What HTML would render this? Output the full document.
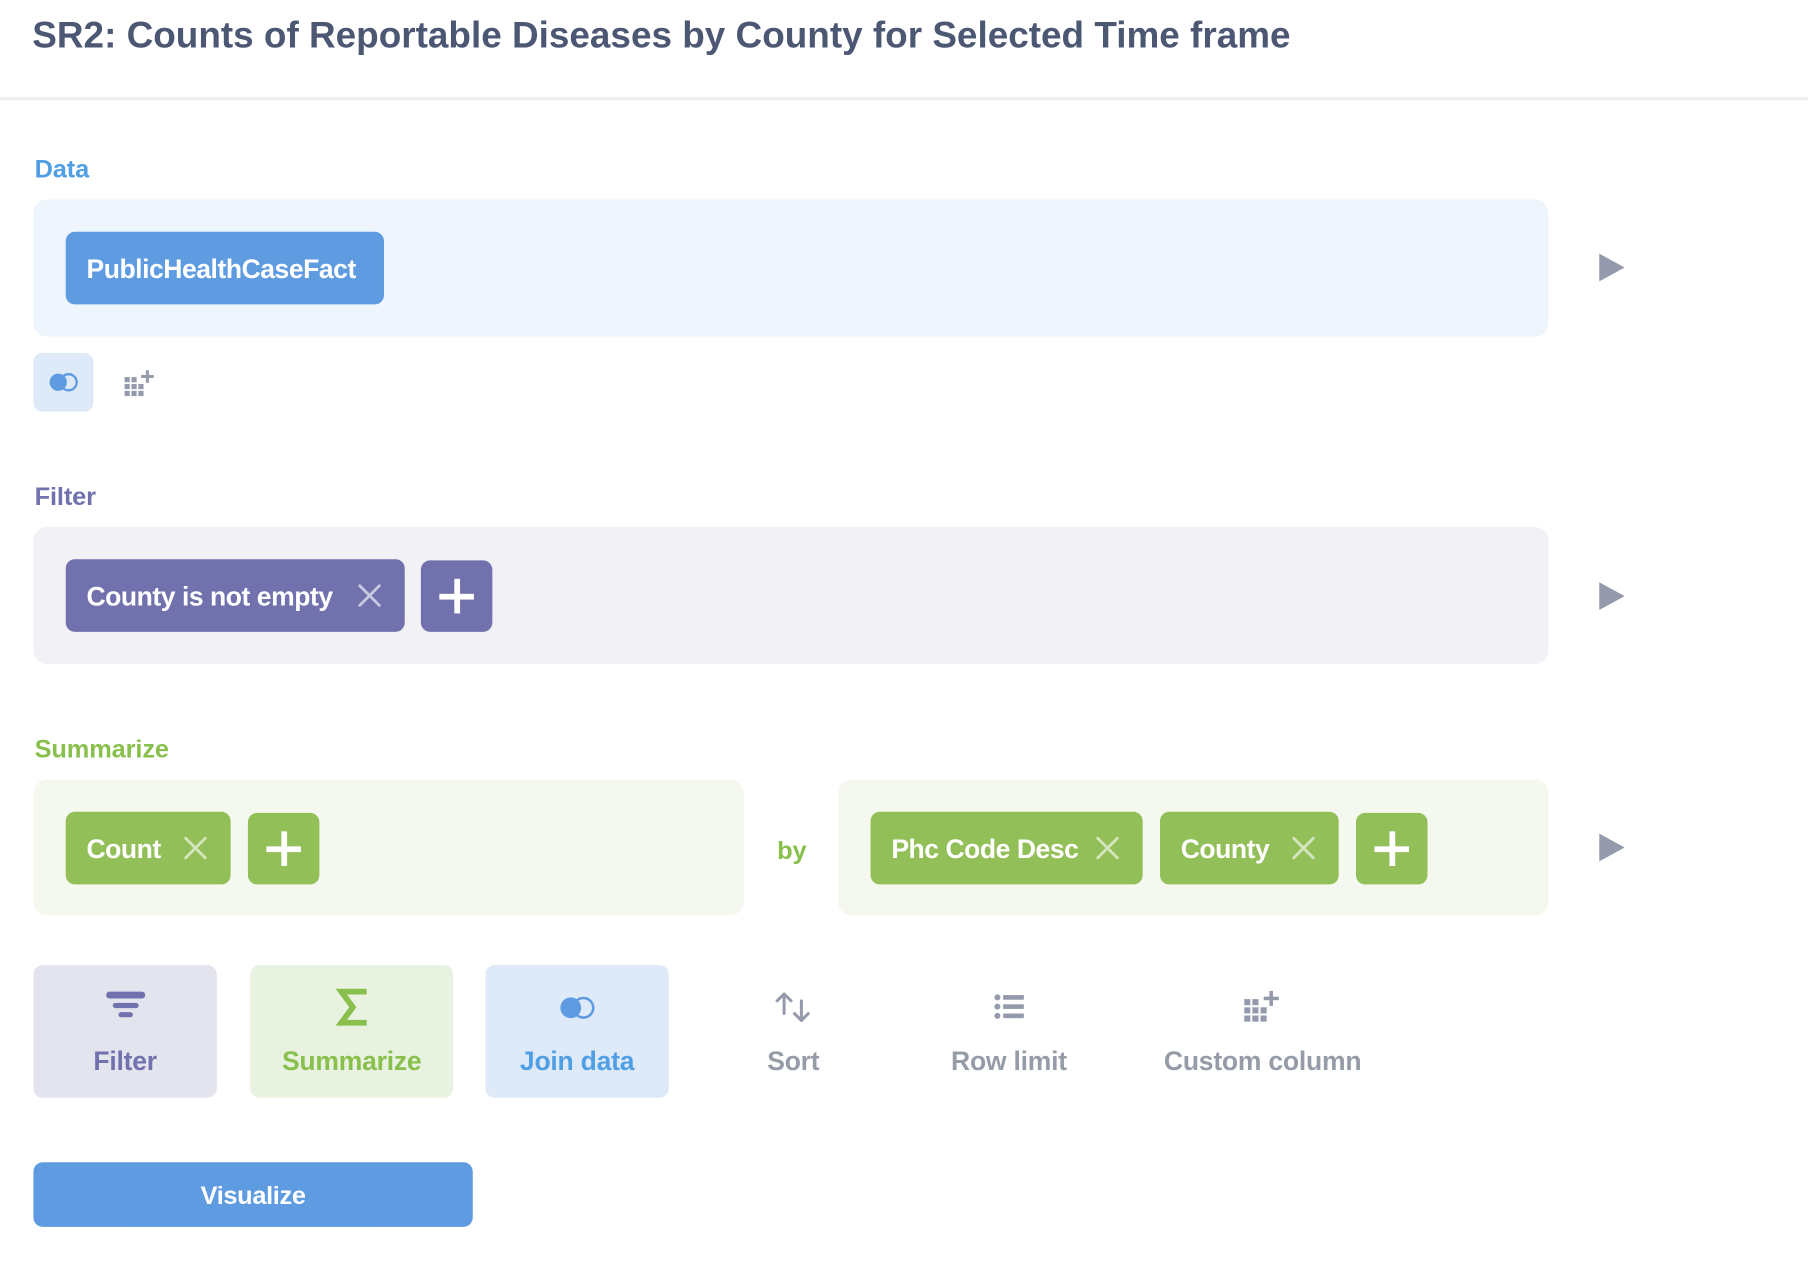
<!DOCTYPE html>
<html><head><meta charset="utf-8"><style>
html,body{margin:0;padding:0;background:#fff;width:1808px;height:1278px;overflow:hidden}
#w{position:absolute;left:0;top:0;width:1568px;height:1108px;transform:scale(1.15306);transform-origin:0 0;font-family:"Liberation Sans",sans-serif}
.a{position:absolute}
.t{left:28px;top:12px;font-size:32px;font-weight:bold;color:#4c5773;letter-spacing:0px;white-space:nowrap}
.hb{left:0;top:84px;width:1568px;height:3px;background:#eeedef}
.lbl{font-size:22px;font-weight:bold;letter-spacing:-0.1px}
.box{border-radius:12px}
.pill{border-radius:8px;color:#fff;font-size:23px;font-weight:bold;height:63px;line-height:63px;white-space:nowrap;letter-spacing:-0.4px}
.pill span{position:absolute;left:18px;top:1px}
.x{position:absolute;top:21px;width:21px;height:21px}
.plus{border-radius:8px;height:62px;width:62px}
.plus:before,.plus:after{content:"";position:absolute;background:#fff;left:50%;top:50%}
.plus:before{width:30px;height:5px;margin:-2.5px 0 0 -15px}
.plus:after{width:5px;height:30px;margin:-15px 0 0 -2.5px}
.tri{width:0;height:0;border-left:22px solid #949aab;border-top:12px solid transparent;border-bottom:12px solid transparent;left:1387px}
.btn{top:837px;height:115px;border-radius:8px}
.bl{position:absolute;top:70px;left:0;width:100%;text-align:center;font-size:23px;font-weight:bold;letter-spacing:-0.2px;white-space:nowrap}
.ic{position:absolute;left:50%;top:22px;transform:translateX(-50%)}
.gr{color:#959ca7}
</style></head><body><div id="w">
<div class="a t">SR2: Counts of Reportable Diseases by County for Selected Time frame</div>
<div class="a hb"></div>

<div class="a lbl" style="left:30px;top:134px;color:#509ee3">Data</div>
<div class="a box" style="left:29px;top:173px;width:1314px;height:119px;background:#eef5fd"></div>
<div class="a pill" style="left:57px;top:201px;width:276px;background:#5e9be0"><span>PublicHealthCaseFact</span></div>
<div class="a tri" style="top:220px"></div>
<div class="a" style="left:29px;top:306px;width:52px;height:51px;border-radius:8px;background:#deeaf8">
<svg class="a" style="left:13px;top:17px" width="27" height="17" viewBox="0 0 27 17"><circle cx="8.5" cy="8.5" r="7.5" fill="#5e9be0"/><circle cx="17.5" cy="8.5" r="7" fill="none" stroke="#5e9be0" stroke-width="2"/></svg></div>
<svg class="a" style="left:108px;top:321px" width="27" height="23" viewBox="0 0 27 23"><g fill="#949aab"><rect x="0" y="6" width="4.5" height="4.5"/><rect x="6" y="6" width="4.5" height="4.5"/><rect x="0" y="12" width="4.5" height="4.5"/><rect x="6" y="12" width="4.5" height="4.5"/><rect x="12" y="12" width="4.5" height="4.5"/><rect x="0" y="18" width="4.5" height="4.5"/><rect x="6" y="18" width="4.5" height="4.5"/><rect x="12" y="18" width="4.5" height="4.5"/><rect x="18.5" y="0" width="2.6" height="11"/><rect x="14.3" y="4.2" width="11" height="2.6"/></g></svg>

<div class="a lbl" style="left:30px;top:418px;color:#7172ad">Filter</div>
<div class="a box" style="left:29px;top:457px;width:1314px;height:119px;background:#f1f1f6"></div>
<div class="a pill" style="left:57px;top:485px;width:294px;background:#7172ad"><span>County is not empty</span>
<svg class="x" style="left:253px" viewBox="0 0 21 21"><path d="M2 2L19 19M19 2L2 19" stroke="#c9c9e0" stroke-width="2.4" stroke-linecap="round"/></svg></div>
<div class="a plus" style="left:365px;top:486px;background:#7172ad"></div>
<div class="a tri" style="top:505px"></div>

<div class="a lbl" style="left:30px;top:637px;color:#88bf4d">Summarize</div>
<div class="a box" style="left:29px;top:676px;width:616px;height:118px;background:#f4f8ee"></div>
<div class="a box" style="left:727px;top:676px;width:616px;height:118px;background:#f4f8ee"></div>
<div class="a pill" style="left:57px;top:704px;width:143px;background:#93bf58"><span>Count</span>
<svg class="x" style="left:102px" viewBox="0 0 21 21"><path d="M2 2L19 19M19 2L2 19" stroke="#d3e6bd" stroke-width="2.4" stroke-linecap="round"/></svg></div>
<div class="a plus" style="left:215px;top:705px;background:#93bf58"></div>
<div class="a lbl" style="left:674px;top:725px;color:#88bf4d">by</div>
<div class="a pill" style="left:755px;top:704px;width:236px;background:#93bf58"><span>Phc Code Desc</span>
<svg class="x" style="left:195px" viewBox="0 0 21 21"><path d="M2 2L19 19M19 2L2 19" stroke="#d3e6bd" stroke-width="2.4" stroke-linecap="round"/></svg></div>
<div class="a pill" style="left:1006px;top:704px;width:155px;background:#93bf58"><span>County</span>
<svg class="x" style="left:114px" viewBox="0 0 21 21"><path d="M2 2L19 19M19 2L2 19" stroke="#d3e6bd" stroke-width="2.4" stroke-linecap="round"/></svg></div>
<div class="a plus" style="left:1176px;top:705px;background:#93bf58"></div>
<div class="a tri" style="top:723px"></div>

<div class="a btn" style="left:29px;width:159px;background:#e4e4ee">
<svg class="ic" width="34" height="26" viewBox="0 0 34 26"><g stroke="#7172ad" stroke-linecap="round"><line x1="3" y1="4" x2="31" y2="4" stroke-width="6"/><line x1="8" y1="13" x2="26" y2="13" stroke-width="4.5"/><line x1="13" y1="21" x2="21" y2="21" stroke-width="4.5"/></g></svg>
<div class="bl" style="color:#7172ad">Filter</div></div>
<div class="a btn" style="left:217px;width:176px;background:#e9f2e0">
<svg class="ic" style="top:20px" width="28" height="33" viewBox="0 0 28 33"><path d="M27 3H5L15 16.5L5 30H27" fill="none" stroke="#88bf4d" stroke-width="5" stroke-linejoin="miter"/></svg>
<div class="bl" style="color:#88bf4d">Summarize</div></div>
<div class="a btn" style="left:421px;width:159px;background:#deeaf8">
<svg class="ic" style="top:27px" width="32" height="20" viewBox="0 0 32 20"><circle cx="10" cy="10" r="9" fill="#5e9be0"/><circle cx="21" cy="10" r="8.5" fill="none" stroke="#5e9be0" stroke-width="2.2"/></svg>
<div class="bl" style="color:#509ee3">Join data</div></div>
<div class="a btn" style="left:628px;width:120px">
<svg class="ic" width="32" height="28" viewBox="0 0 32 28"><g fill="none" stroke="#949aab" stroke-width="2.6" stroke-linecap="round" stroke-linejoin="round"><path d="M8 20V3M2 9L8 3L14 9"/><path d="M23 9V26M17 20L23 26L29 20"/></g></svg>
<div class="bl gr">Sort</div></div>
<div class="a btn" style="left:805px;width:140px">
<svg class="ic" style="top:25px" width="26" height="22" viewBox="0 0 26 22"><g fill="#949aab"><circle cx="3" cy="3" r="2.6"/><circle cx="3" cy="11" r="2.6"/><circle cx="3" cy="19" r="2.6"/><rect x="8" y="1" width="18" height="4"/><rect x="8" y="9" width="18" height="4"/><rect x="8" y="17" width="18" height="4"/></g></svg>
<div class="bl gr">Row limit</div></div>
<div class="a btn" style="left:995px;width:200px">
<svg class="ic" style="top:22px" width="32" height="28" viewBox="0 0 27 23"><g fill="#949aab"><rect x="0" y="6" width="4.5" height="4.5"/><rect x="6" y="6" width="4.5" height="4.5"/><rect x="0" y="12" width="4.5" height="4.5"/><rect x="6" y="12" width="4.5" height="4.5"/><rect x="12" y="12" width="4.5" height="4.5"/><rect x="0" y="18" width="4.5" height="4.5"/><rect x="6" y="18" width="4.5" height="4.5"/><rect x="12" y="18" width="4.5" height="4.5"/><rect x="18.5" y="0" width="2.6" height="11"/><rect x="14.3" y="4.2" width="11" height="2.6"/></g></svg>
<div class="bl gr">Custom column</div></div>

<div class="a" style="left:29px;top:1008px;width:381px;height:56px;border-radius:8px;background:#5e9be0;color:#fff;font-size:22px;font-weight:bold;text-align:center;line-height:58px;letter-spacing:-0.3px">Visualize</div>
</div></body></html>
